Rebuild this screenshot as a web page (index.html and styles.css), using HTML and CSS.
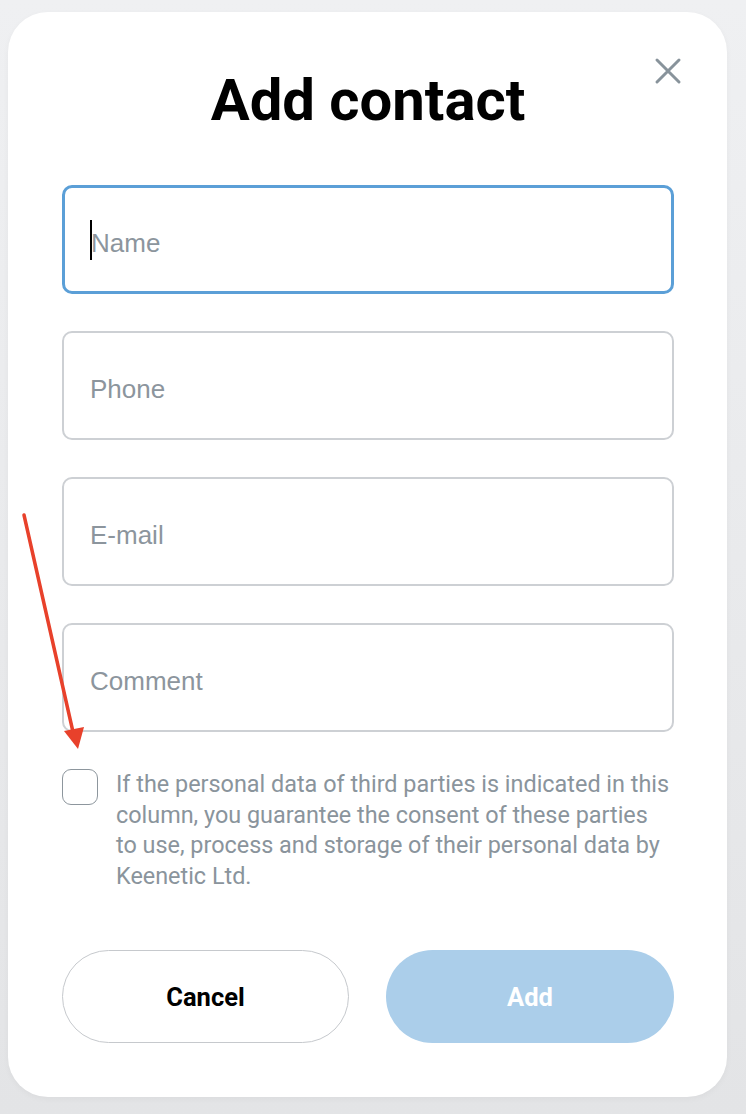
FILE: index.html
```html
<!DOCTYPE html>
<html lang="en">
<head>
<meta charset="utf-8">
<title>Add contact</title>
<link rel="stylesheet" href="styles.css">
</head>
<body>
<div class="page">
  <div class="modal">
    <button class="close" aria-label="Close">
      <svg width="28" height="28" viewBox="0 0 28 28"><path d="M3 3 L25 25 M25 3 L3 25" stroke="#88939b" stroke-width="3" stroke-linecap="round" fill="none"/></svg>
    </button>
    <h1 class="title">Add contact</h1>
    <div class="fields">
      <div class="field focused"><span class="caret"></span><span class="ph">Name</span></div>
      <div class="field"><span class="ph">Phone</span></div>
      <div class="field"><span class="ph">E-mail</span></div>
      <div class="field"><span class="ph">Comment</span></div>
    </div>
    <label class="consent">
      <span class="box"></span>
      <span class="consent-text">If the personal data of third parties is indicated in this column, you guarantee the consent of these parties to use, process and storage of their personal data by Keenetic Ltd.</span>
    </label>
    <div class="actions">
      <button class="btn cancel">Cancel</button>
      <button class="btn add">Add</button>
    </div>
  </div>
  <svg class="arrow" width="100" height="260" viewBox="0 0 100 260">
    <line x1="24" y1="515" x2="73" y2="732" transform="translate(0,-500)" stroke="#e8412b" stroke-width="3.5" stroke-linecap="round"/>
    <polygon points="64,731 84,727 78,749" transform="translate(0,-500)" fill="#e8412b"/>
  </svg>
</div>
</body>
</html>
```

FILE: styles.css
```css
html, body {
  margin: 0;
  padding: 0;
}
body {
  width: 746px;
  height: 1114px;
  background: linear-gradient(180deg, #eff0f2 0%, #e3e4e6 100%);
  font-family: Roboto, "Liberation Sans", sans-serif;
  overflow: hidden;
}
.page {
  position: relative;
  padding: 12px 19px 17px 8px;
}
.modal {
  position: relative;
  box-sizing: border-box;
  width: 719px;
  height: 1085px;
  background: #fff;
  border-radius: 40px;
  padding: 53px 53px 54px 54px;
  display: flex;
  flex-direction: column;
  box-shadow: 0 2px 6px rgba(0,0,0,0.04);
}
.close {
  position: absolute;
  top: 45px;
  right: 45px;
  width: 28px;
  height: 28px;
  padding: 0;
  border: 0;
  background: none;
  display: flex;
}
.title {
  margin: 0;
  text-align: center;
  font-family: Roboto, sans-serif;
  font-weight: 700;
  font-size: 58px;
  line-height: 70px;
  color: #000;
}
.fields {
  margin-top: 50px;
  display: flex;
  flex-direction: column;
  gap: 37px;
}
.field {
  box-sizing: border-box;
  height: 109px;
  border: 2px solid #cdd0d4;
  border-radius: 10px;
  display: flex;
  align-items: center;
  padding-left: 26px;
  padding-top: 7px;
  position: relative;
}
.field.focused {
  border: 3px solid #5b9fd7;
  padding-left: 25px;
}
.ph {
  font-family: "Liberation Sans", Arial, sans-serif;
  font-size: 26px;
  color: #8c959d;
}
.caret {
  width: 2px;
  height: 40px;
  background: #000;
  margin-right: -1px;
  margin-top: -7px;
}
.consent {
  margin-top: 37px;
  display: flex;
  align-items: flex-start;
  gap: 18px;
}
.box {
  flex: none;
  box-sizing: border-box;
  width: 36px;
  height: 36px;
  border: 1.5px solid #8d969d;
  border-radius: 9px;
}
.consent-text {
  font-family: Roboto, sans-serif;
  font-size: 23.4px;
  line-height: 30.5px;
  color: #8a949c;
  margin-top: 0;
}
.actions {
  margin-top: auto;
  display: flex;
  gap: 37px;
}
.btn {
  height: 93px;
  border-radius: 47px;
  font-family: Roboto, sans-serif;
  font-weight: 700;
  font-size: 25.5px;
}
.cancel {
  width: 287px;
  background: #fff;
  border: 1.5px solid #c6c9cd;
  color: #000;
}
.add {
  width: 288px;
  background: #abceea;
  border: 0;
  color: #fff;
}
.arrow {
  position: absolute;
  left: 0;
  top: 500px;
}
```
